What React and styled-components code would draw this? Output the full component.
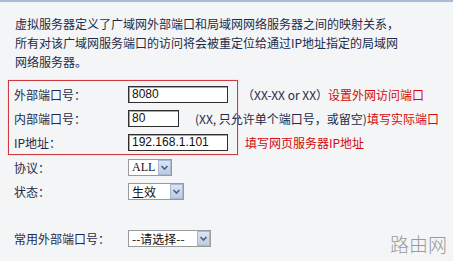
import React from 'react'
import styled, { createGlobalStyle } from 'styled-components'

const GlobalStyle = createGlobalStyle`
  html, body {
    margin: 0;
    padding: 0;
    background: #f4f5f6;
  }
  body {
    font-family: "Noto Sans CJK SC", "Liberation Sans", sans-serif;
    font-size: 12px;
    color: #1c2b49;
  }
`;

const Page = styled.div`
  position: relative;
  width: 453px;
  height: 261px;
  box-sizing: border-box;
  overflow: hidden;
  border-top: 2px solid #a9bbd2;
  background: #f4f5f6;
`;

const Intro = styled.div`
  padding: 12px 0 0 15px;
  line-height: 19px;
  white-space: nowrap;
`;

const Form = styled.div`
  margin-top: 9px;
`;

const Highlight = styled.div`
  position: relative;
  padding: 2px 0 1px;
  &::before {
    content: '';
    position: absolute;
    left: 8px;
    top: 0;
    bottom: 0;
    width: 228px;
    border: 1px solid #d0393d;
    box-shadow: 0 0 1px rgba(208, 57, 61, 0.4);
    pointer-events: none;
  }
`;

const Row = styled.div`
  display: flex;
  align-items: center;
  height: 24px;
  padding-left: 14px;
  white-space: nowrap;
`;

const Spacer = styled.div`
  height: 23px;
`;

const Label = styled.span`
  width: 114px;
  flex: none;
`;

const TextBox = styled.div`
  box-sizing: border-box;
  width: ${p => p.$w}px;
  height: 17px;
  flex: none;
  background: #fff;
  border: 1px solid #2e2e2e;
  box-shadow: inset 1px 1px 0 #a8a8a8;
  padding: 0 3px;
  font-family: "Liberation Sans", sans-serif;
  font-size: 12px;
  line-height: 15px;
  color: #111;
`;

const Hint = styled.span`
  margin-left: ${p => p.$gap}px;
  color: #1c2b49;
`;

const Note = styled.span`
  color: #d30a0a;
`;

const Select = styled.div`
  box-sizing: border-box;
  display: flex;
  align-items: center;
  width: ${p => p.$w}px;
  height: 17px;
  flex: none;
  background: #fff;
  border: 1px solid #9a9a9a;
  padding-left: 3px;
  color: #111;
  line-height: 15px;
`;

const SelectText = styled.span`
  flex: 1;
  font-family: ${p => (p.$serif ? '"Liberation Serif", serif' : 'inherit')};
`;

const Arrow = styled.span`
  box-sizing: border-box;
  width: 13px;
  height: 15px;
  flex: none;
  display: flex;
  align-items: center;
  justify-content: center;
  background: linear-gradient(#dbe4f2, #bccce3);
  border: 1px solid #a9b8d1;
`;

const Watermark = styled.div`
  position: absolute;
  right: 6px;
  bottom: 5px;
  font-size: 19px;
  line-height: 24px;
  color: #9a9a9a;
  font-weight: 300;
`;

const Chevron = () => (
  <svg width="9" height="7" viewBox="0 0 9 7">
    <path d="M1.5 2 L4.5 5 L7.5 2" fill="none" stroke="#4b5f86" strokeWidth="1.6" />
  </svg>
)

const Dropdown = ({ w, value, serif }) => (
  <Select $w={w}>
    <SelectText $serif={serif}>{value}</SelectText>
    <Arrow><Chevron /></Arrow>
  </Select>
)

export default function App() {
  return (
    <>
      <GlobalStyle />
      <Page>
        <Intro>
          虚拟服务器定义了广域网外部端口和局域网网络服务器之间的映射关系，<br />
          所有对该广域网服务端口的访问将会被重定位给通过IP地址指定的局域网<br />
          网络服务器。
        </Intro>

        <Form>
          <Highlight>
            <Row>
              <Label>外部端口号：</Label>
              <TextBox $w={100}>8080</TextBox>
              <Hint $gap={14}>（XX-XX or XX）<Note>设置外网访问端口</Note></Hint>
            </Row>
            <Row>
              <Label>内部端口号：</Label>
              <TextBox $w={51}>80</TextBox>
              <Hint $gap={16}>(XX, 只允许单个端口号，或留空)<Note>填写实际端口</Note></Hint>
            </Row>
            <Row>
              <Label>IP地址：</Label>
              <TextBox $w={100}>192.168.1.101</TextBox>
              <Hint $gap={17}><Note>填写网页服务器IP地址</Note></Hint>
            </Row>
          </Highlight>

          <Row>
            <Label>协议：</Label>
            <Dropdown w={44} value="ALL" serif />
          </Row>
          <Row>
            <Label>状态：</Label>
            <Dropdown w={56} value="生效" />
          </Row>
          <Spacer />
          <Row>
            <Label>常用外部端口号：</Label>
            <Dropdown w={83} value="--请选择--" />
          </Row>
        </Form>

        <Watermark>路由网</Watermark>
      </Page>
    </>
  )
}
